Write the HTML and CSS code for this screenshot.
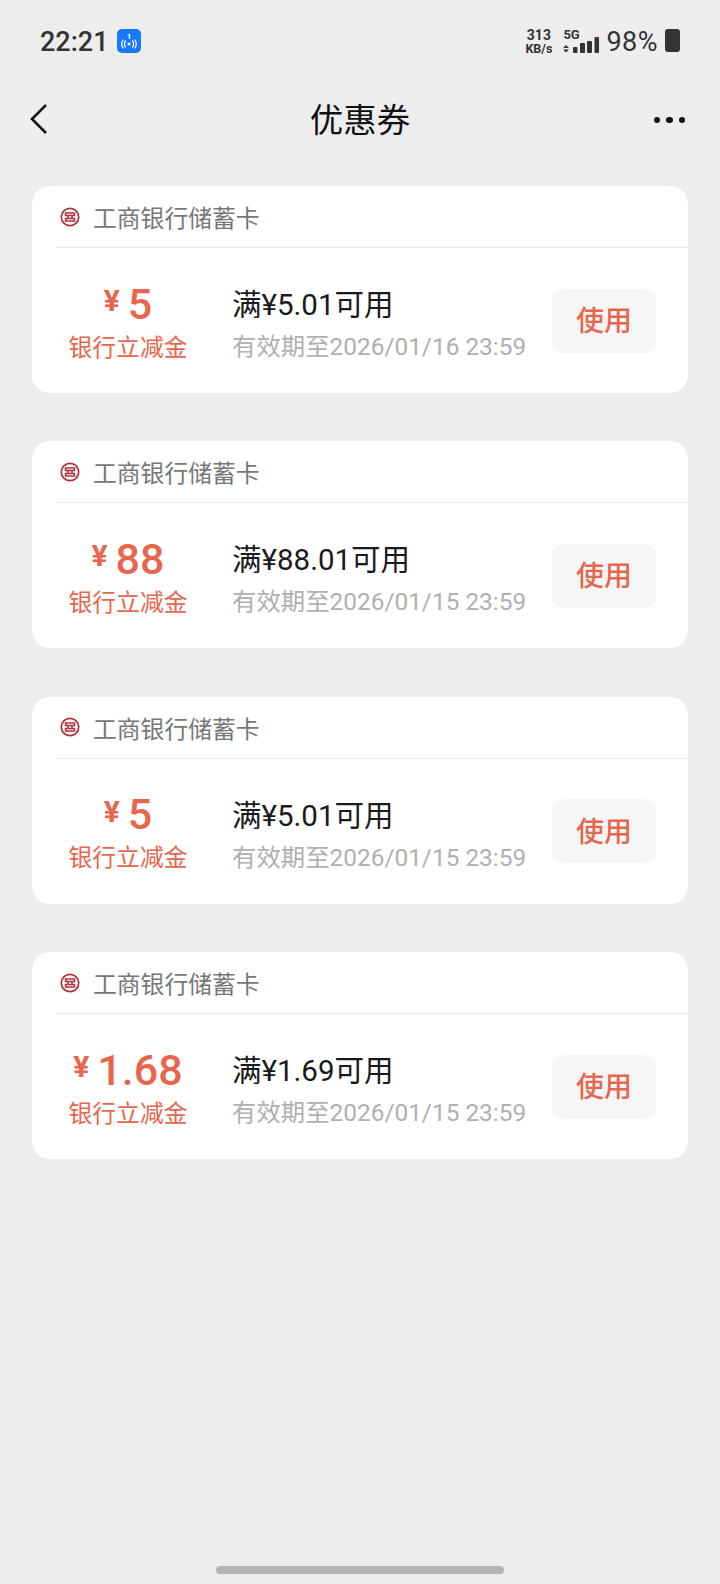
FILE: index.html
```html
<!DOCTYPE html>
<html lang="zh">
<head>
<meta charset="utf-8">
<title>优惠券</title>
<link rel="stylesheet" href="styles.css">
</head>
<body>
<div class="page">
  <header class="status">
    <div class="status-left">
      <span class="time">22:21</span>
      <svg class="hotspot" viewBox="0 0 24 24" width="24" height="24">
        <rect width="24" height="24" rx="5" fill="#1677ff"/>
        <text x="12" y="10" font-size="8" font-weight="700" text-anchor="middle" fill="#fff" font-family="Roboto">1</text>
        <circle cx="12" cy="15" r="1.6" fill="#fff"/>
        <path d="M8.8 11.5a5 5 0 0 0 0 7M15.2 11.5a5 5 0 0 1 0 7M6.4 10.5a7.5 7.5 0 0 0 0 9M17.6 10.5a7.5 7.5 0 0 1 0 9" fill="none" stroke="#fff" stroke-width="1.2"/>
      </svg>
    </div>
    <div class="status-right">
      <div class="speed"><span class="speed-num">313</span><span>KB/s</span></div>
      <div class="signal">
        <span class="net">5G</span>
        <svg viewBox="0 0 38 16" width="38" height="16" class="bars">
          <path d="M5 8l3 3H2zM5 15.500l3-3H2z" fill="#333"/>
          <rect x="12" y="10" width="4.500" height="6" rx="1" fill="#333"/>
          <rect x="19" y="6" width="5" height="10" rx="1" fill="#333"/>
          <rect x="26" y="4" width="5" height="12" rx="1" fill="#333"/>
          <rect x="33.500" y="0" width="4.500" height="16" rx="1" fill="#333"/>
        </svg>
      </div>
      <span class="battery-text">98%</span>
      <span class="battery"></span>
    </div>
  </header>

  <nav class="nav">
    <svg class="back" viewBox="0 0 20 32" width="20" height="32">
      <path d="M17 2L3 16l14 14" fill="none" stroke="#111" stroke-width="2.600"/>
    </svg>
    <h1 class="title">优惠券</h1>
    <div class="more"><i></i><i></i><i></i></div>
  </nav>

  <main class="list">
    <section class="card">
      <div class="card-head">
        <svg class="logo" viewBox="0 0 20 20" width="20" height="20"><circle cx="10" cy="10" r="8.700" fill="none" stroke="#b0303a" stroke-width="1.700"/><path d="M5.500 6h9v2.500h-9zM8 8.500v3M12 8.500v3M5.500 11.500h9V14h-9z" fill="none" stroke="#b0303a" stroke-width="1.500"/></svg>
        <span class="bank">工商银行储蓄卡</span>
      </div>
      <div class="card-body">
        <div class="amount-col">
          <div class="amount"><span class="yen">¥</span><span class="num">5</span></div>
          <div class="kind">银行立减金</div>
        </div>
        <div class="info">
          <div class="cond">满¥5.01可用</div>
          <div class="date">有效期至2026/01/16 23:59</div>
        </div>
        <div class="use">使用</div>
      </div>
    </section>
    <section class="card">
      <div class="card-head">
        <svg class="logo" viewBox="0 0 20 20" width="20" height="20"><circle cx="10" cy="10" r="8.700" fill="none" stroke="#b0303a" stroke-width="1.700"/><path d="M5.500 6h9v2.500h-9zM8 8.500v3M12 8.500v3M5.500 11.500h9V14h-9z" fill="none" stroke="#b0303a" stroke-width="1.500"/></svg>
        <span class="bank">工商银行储蓄卡</span>
      </div>
      <div class="card-body">
        <div class="amount-col">
          <div class="amount"><span class="yen">¥</span><span class="num">88</span></div>
          <div class="kind">银行立减金</div>
        </div>
        <div class="info">
          <div class="cond">满¥88.01可用</div>
          <div class="date">有效期至2026/01/15 23:59</div>
        </div>
        <div class="use">使用</div>
      </div>
    </section>
    <section class="card">
      <div class="card-head">
        <svg class="logo" viewBox="0 0 20 20" width="20" height="20"><circle cx="10" cy="10" r="8.700" fill="none" stroke="#b0303a" stroke-width="1.700"/><path d="M5.500 6h9v2.500h-9zM8 8.500v3M12 8.500v3M5.500 11.500h9V14h-9z" fill="none" stroke="#b0303a" stroke-width="1.500"/></svg>
        <span class="bank">工商银行储蓄卡</span>
      </div>
      <div class="card-body">
        <div class="amount-col">
          <div class="amount"><span class="yen">¥</span><span class="num">5</span></div>
          <div class="kind">银行立减金</div>
        </div>
        <div class="info">
          <div class="cond">满¥5.01可用</div>
          <div class="date">有效期至2026/01/15 23:59</div>
        </div>
        <div class="use">使用</div>
      </div>
    </section>
    <section class="card">
      <div class="card-head">
        <svg class="logo" viewBox="0 0 20 20" width="20" height="20"><circle cx="10" cy="10" r="8.700" fill="none" stroke="#b0303a" stroke-width="1.700"/><path d="M5.500 6h9v2.500h-9zM8 8.500v3M12 8.500v3M5.500 11.500h9V14h-9z" fill="none" stroke="#b0303a" stroke-width="1.500"/></svg>
        <span class="bank">工商银行储蓄卡</span>
      </div>
      <div class="card-body">
        <div class="amount-col">
          <div class="amount"><span class="yen">¥</span><span class="num">1.68</span></div>
          <div class="kind">银行立减金</div>
        </div>
        <div class="info">
          <div class="cond">满¥1.69可用</div>
          <div class="date">有效期至2026/01/15 23:59</div>
        </div>
        <div class="use">使用</div>
      </div>
    </section>
  </main>

  <div class="home-bar"></div>
</div>
</body>
</html>
```

FILE: styles.css
```css
* { box-sizing: border-box; margin: 0; padding: 0; }
html, body { background: #ededed; }
body { font-family: Roboto, "Noto Sans CJK SC", sans-serif; }

.page {
  width: 720px;
  height: 1584px;
  display: flex;
  flex-direction: column;
  background: #ededed;
}

.status {
  height: 80px;
  padding: 0 40px;
  display: flex;
  align-items: center;
  justify-content: space-between;
  color: #333;
}
.status-left { display: flex; align-items: center; gap: 8px; padding-top: 2px; }
.time { font-size: 27px; font-weight: 500; padding-top: 1px; }
.hotspot { display: block; }
.status-right { display: flex; align-items: center; }
.speed {
  display: flex;
  flex-direction: column;
  align-items: center;
  padding-top: 3px;
  font-size: 12.500px;
  line-height: 14px;
  font-weight: 700;
  margin-right: 9px;
}
.speed-num { font-size: 14px; }
.signal { position: relative; width: 38px; height: 30px; margin-right: 7px; }
.net { position: absolute; left: 2px; top: 3px; font-size: 13px; line-height: 14px; font-weight: 700; }
.bars { position: absolute; left: 0; top: 12px; }
.battery-text { font-size: 27px; font-weight: 400; letter-spacing: 0.500px; margin-right: 7px; padding-top: 4px; }
.battery { width: 15px; height: 23px; border-radius: 3px; background: #333; }

.nav {
  height: 80px;
  padding: 0 29px;
  display: grid;
  grid-template-columns: 1fr auto 1fr;
  align-items: center;
}
.back { display: block; margin-top: -2px; }
.title { font-size: 33.500px; line-height: 40px; font-weight: 400; color: #111; padding-top: 2px; }
.more { display: flex; gap: 6px; justify-self: end; margin-right: 6px; }
.more i { width: 6.500px; height: 6.500px; border-radius: 50%; background: #111; }

.list {
  padding: 26px 32px 0;
  display: flex;
  flex-direction: column;
  gap: 48.400px;
}
.card {
  height: 207px;
  background: #fff;
  border-radius: 18px;
  padding-left: 24px;
  display: flex;
  flex-direction: column;
}
.card-head {
  height: 62px;
  border-bottom: 1px solid #e9e9e9;
  display: flex;
  align-items: center;
  padding-left: 4px;
  gap: 13px;
}
.logo { display: block; flex: none; }
.bank { font-size: 23.800px; color: #777; }
.card-body { flex: 1; display: flex; align-items: center; padding-right: 32px; }
.amount-col { width: 142px; padding-top: 3px; margin-left: 1px; display: flex; flex-direction: column; align-items: center; }
.amount { height: 50px; padding-bottom: 2px; display: flex; align-items: center; color: #e8664d; }
.yen { font-size: 30px; font-weight: 700; margin-right: 8px; position: relative; top: -3px; }
.num { font-size: 43px; font-weight: 500; }
.kind { font-size: 23.800px; line-height: 34px; color: #e8664d; margin-top: 1px; }
.info { margin-left: 33px; padding-top: 10px; flex: 1; }
.cond { font-size: 29.500px; line-height: 38px; color: #1a1a1a; }
.date { font-size: 24.400px; line-height: 36px; color: #b0b0b0; margin-top: 5px; white-space: nowrap; }
.use {
  width: 104px;
  height: 64px;
  padding-bottom: 3px;
  border-radius: 12px;
  background: #f6f6f6;
  color: #e8664d;
  font-size: 28px;
  font-weight: 500;
  display: flex;
  align-items: center;
  justify-content: center;
}

.home-bar {
  width: 288px;
  height: 8px;
  border-radius: 4px;
  background: #b4b4b4;
  margin: auto auto 10px;
}
```
